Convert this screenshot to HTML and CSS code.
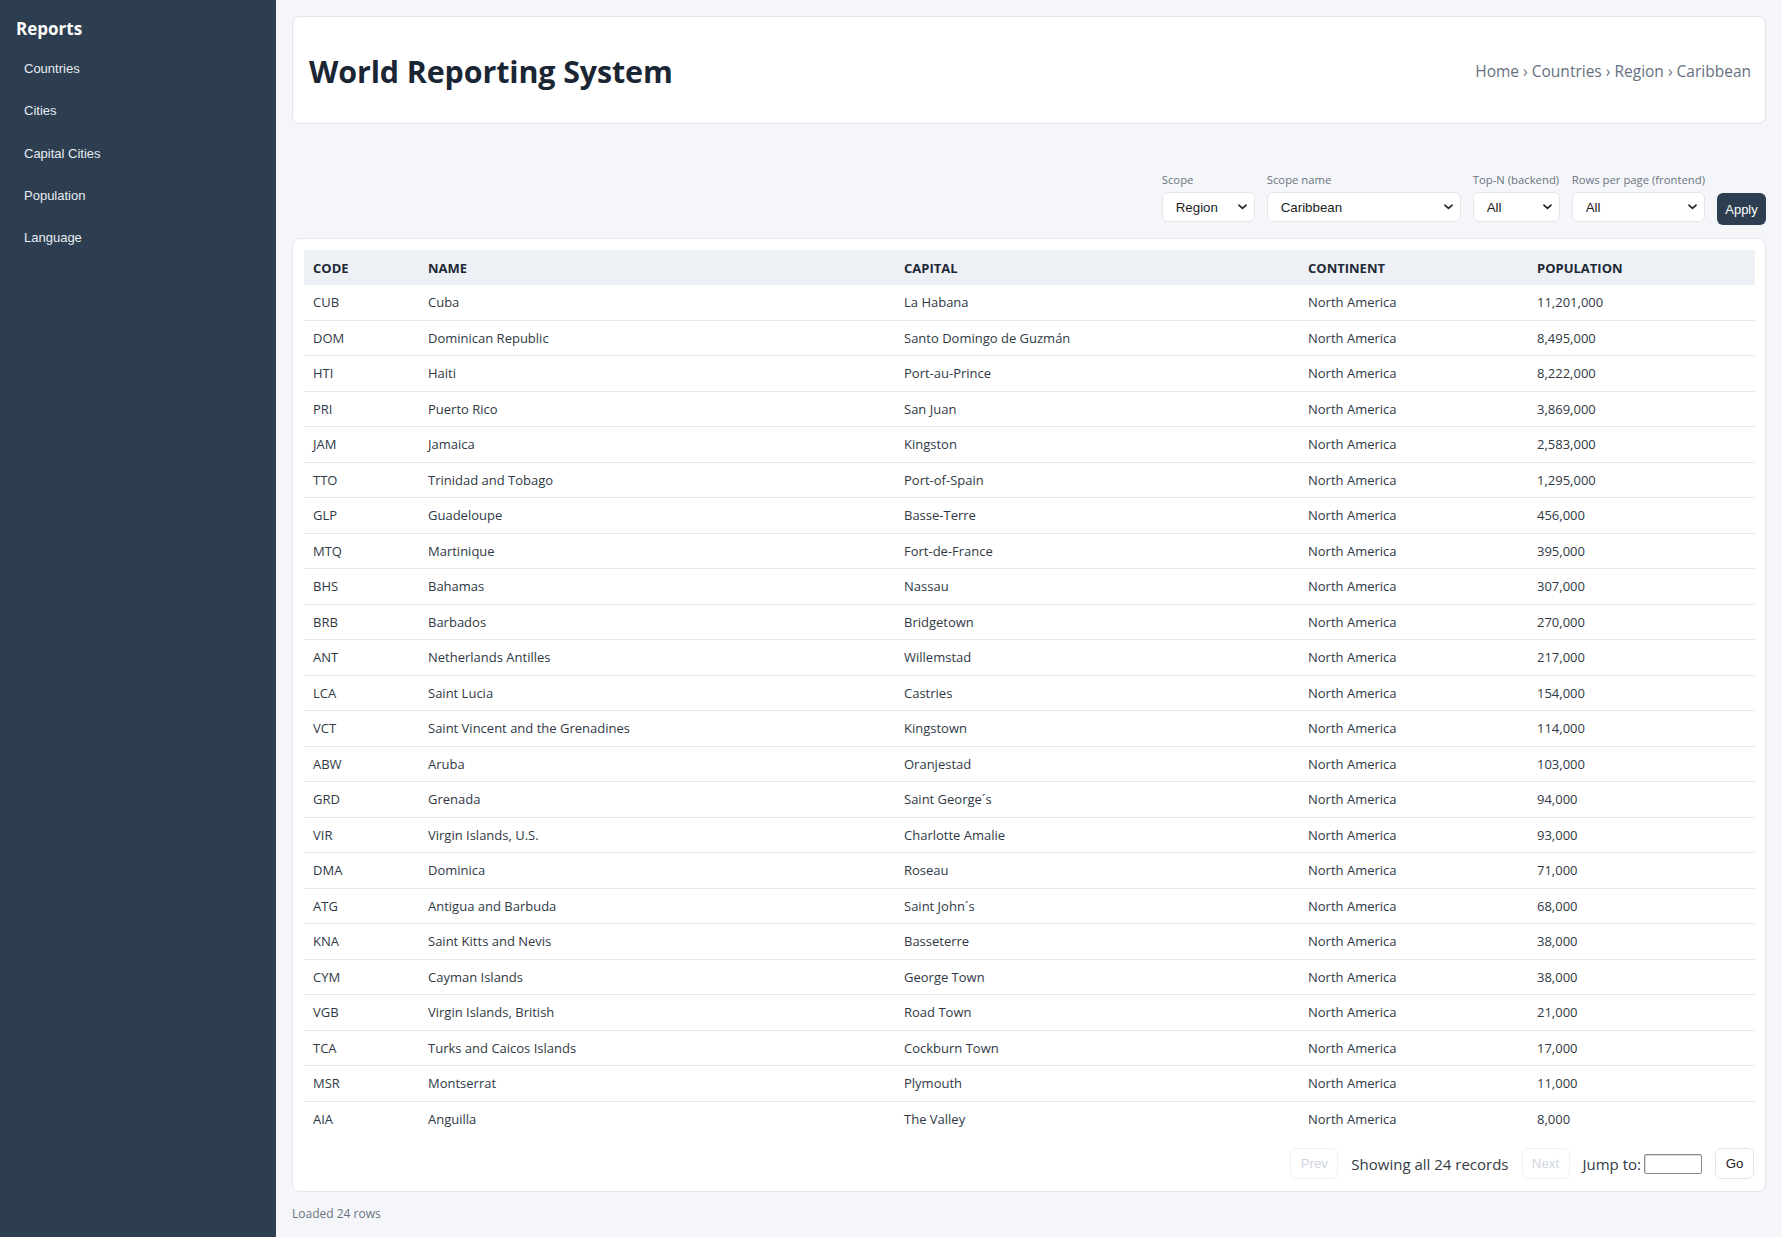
FILE: index.html
```html
<!DOCTYPE html>
<html lang="en">
<head>
<meta charset="utf-8">
<title>World Reporting System</title>
<link rel="stylesheet" href="styles.css">
</head>
<body>
<aside class="sidebar">
  <h2 class="brand">Reports</h2>
  <nav class="nav">
    <a class="nav-link" href="#">Countries</a>
    <a class="nav-link" href="#">Cities</a>
    <a class="nav-link" href="#">Capital Cities</a>
    <a class="nav-link" href="#">Population</a>
    <a class="nav-link" href="#">Language</a>
  </nav>
</aside>
<main class="main">
  <header class="header-card">
    <h1 class="title">World Reporting System</h1>
    <div class="crumbs">Home › Countries › Region › Caribbean</div>
  </header>

  <div class="filters">
    <div class="field">
      <label class="field-label">Scope</label>
      <div class="select-wrap w-scope">
        <select class="select"><option>Region</option></select>
        <svg class="chev" viewBox="0 0 10 6" width="9" height="6"><path d="M1 1l4 3.6L9 1" fill="none" stroke="#222" stroke-width="1.8" stroke-linecap="round" stroke-linejoin="round"/></svg>
      </div>
    </div>
    <div class="field">
      <label class="field-label">Scope name</label>
      <div class="select-wrap w-name">
        <select class="select"><option>Caribbean</option></select>
        <svg class="chev" viewBox="0 0 10 6" width="9" height="6"><path d="M1 1l4 3.6L9 1" fill="none" stroke="#222" stroke-width="1.8" stroke-linecap="round" stroke-linejoin="round"/></svg>
      </div>
    </div>
    <div class="field">
      <label class="field-label">Top-N (backend)</label>
      <div class="select-wrap w-top">
        <select class="select"><option>All</option></select>
        <svg class="chev" viewBox="0 0 10 6" width="9" height="6"><path d="M1 1l4 3.6L9 1" fill="none" stroke="#222" stroke-width="1.8" stroke-linecap="round" stroke-linejoin="round"/></svg>
      </div>
    </div>
    <div class="field">
      <label class="field-label">Rows per page (frontend)</label>
      <div class="select-wrap w-rows">
        <select class="select"><option>All</option></select>
        <svg class="chev" viewBox="0 0 10 6" width="9" height="6"><path d="M1 1l4 3.6L9 1" fill="none" stroke="#222" stroke-width="1.8" stroke-linecap="round" stroke-linejoin="round"/></svg>
      </div>
    </div>
    <button class="apply">Apply</button>
  </div>

  <section class="table-card">
    <table class="data">
      <colgroup>
        <col class="c-code"><col class="c-name"><col class="c-cap"><col class="c-cont"><col class="c-pop">
      </colgroup>
      <thead>
        <tr><th>CODE</th><th>NAME</th><th>CAPITAL</th><th>CONTINENT</th><th>POPULATION</th></tr>
      </thead>
      <tbody>
        <tr><td>CUB</td><td>Cuba</td><td>La Habana</td><td>North America</td><td>11,201,000</td></tr>
        <tr><td>DOM</td><td>Dominican Republic</td><td>Santo Domingo de Guzmán</td><td>North America</td><td>8,495,000</td></tr>
        <tr><td>HTI</td><td>Haiti</td><td>Port-au-Prince</td><td>North America</td><td>8,222,000</td></tr>
        <tr><td>PRI</td><td>Puerto Rico</td><td>San Juan</td><td>North America</td><td>3,869,000</td></tr>
        <tr><td>JAM</td><td>Jamaica</td><td>Kingston</td><td>North America</td><td>2,583,000</td></tr>
        <tr><td>TTO</td><td>Trinidad and Tobago</td><td>Port-of-Spain</td><td>North America</td><td>1,295,000</td></tr>
        <tr><td>GLP</td><td>Guadeloupe</td><td>Basse-Terre</td><td>North America</td><td>456,000</td></tr>
        <tr><td>MTQ</td><td>Martinique</td><td>Fort-de-France</td><td>North America</td><td>395,000</td></tr>
        <tr><td>BHS</td><td>Bahamas</td><td>Nassau</td><td>North America</td><td>307,000</td></tr>
        <tr><td>BRB</td><td>Barbados</td><td>Bridgetown</td><td>North America</td><td>270,000</td></tr>
        <tr><td>ANT</td><td>Netherlands Antilles</td><td>Willemstad</td><td>North America</td><td>217,000</td></tr>
        <tr><td>LCA</td><td>Saint Lucia</td><td>Castries</td><td>North America</td><td>154,000</td></tr>
        <tr><td>VCT</td><td>Saint Vincent and the Grenadines</td><td>Kingstown</td><td>North America</td><td>114,000</td></tr>
        <tr><td>ABW</td><td>Aruba</td><td>Oranjestad</td><td>North America</td><td>103,000</td></tr>
        <tr><td>GRD</td><td>Grenada</td><td>Saint George´s</td><td>North America</td><td>94,000</td></tr>
        <tr><td>VIR</td><td>Virgin Islands, U.S.</td><td>Charlotte Amalie</td><td>North America</td><td>93,000</td></tr>
        <tr><td>DMA</td><td>Dominica</td><td>Roseau</td><td>North America</td><td>71,000</td></tr>
        <tr><td>ATG</td><td>Antigua and Barbuda</td><td>Saint John´s</td><td>North America</td><td>68,000</td></tr>
        <tr><td>KNA</td><td>Saint Kitts and Nevis</td><td>Basseterre</td><td>North America</td><td>38,000</td></tr>
        <tr><td>CYM</td><td>Cayman Islands</td><td>George Town</td><td>North America</td><td>38,000</td></tr>
        <tr><td>VGB</td><td>Virgin Islands, British</td><td>Road Town</td><td>North America</td><td>21,000</td></tr>
        <tr><td>TCA</td><td>Turks and Caicos Islands</td><td>Cockburn Town</td><td>North America</td><td>17,000</td></tr>
        <tr><td>MSR</td><td>Montserrat</td><td>Plymouth</td><td>North America</td><td>11,000</td></tr>
        <tr><td>AIA</td><td>Anguilla</td><td>The Valley</td><td>North America</td><td>8,000</td></tr>
      </tbody>
    </table>
    <div class="pager">
      <button class="pg-btn" disabled>Prev</button>
      <span class="pg-text">Showing all 24 records</span>
      <button class="pg-btn" disabled>Next</button>
      <span class="pg-text">Jump to: <input class="jump" type="text"></span>
      <button class="pg-btn go">Go</button>
    </div>
  </section>

  <div class="status">Loaded 24 rows</div>
</main>
</body>
</html>
```

FILE: styles.css
```css
* { box-sizing: border-box; }

html, body {
  margin: 0;
  padding: 0;
}

body {
  display: flex;
  min-height: 100vh;
  background: #f4f6f9;
  font-family: "Open Sans", "Noto Sans", sans-serif;
  color: #1f2a37;
}

.sidebar {
  width: 276px;
  flex: 0 0 276px;
  background: #2d3e50;
  padding: 16px 16px;
}

.brand {
  margin: 0 0 6px 0;
  font-family: "Open Sans", sans-serif;
  font-weight: 700;
  font-size: 17px;
  line-height: 26px;
  color: #ffffff;
}

.nav {
  display: flex;
  flex-direction: column;
}

.nav-link {
  display: block;
  padding: 12px 8px;
  font-family: "Liberation Sans", Arial, sans-serif;
  font-size: 13px;
  line-height: 18.3px;
  color: #e8ecf0;
  text-decoration: none;
}

.main {
  flex: 1;
  padding: 16px 16px 16px 16px;
  display: flex;
  flex-direction: column;
}

.header-card {
  height: 108px;
  background: #ffffff;
  border: 1px solid #e1e6ec;
  border-radius: 8px;
  padding: 0 14px 0 16px;
  display: flex;
  align-items: center;
  justify-content: space-between;
}

.title {
  margin: 3px 0 0 0;
  font-size: 30.4px;
  font-weight: 700;
  line-height: 40px;
  color: #1b2634;
  letter-spacing: -0.1px;
}

.crumbs {
  font-size: 15.5px;
  font-weight: 500;
  color: #667180;
  margin-top: 2px;
}

.filters {
  margin-top: 48px;
  display: flex;
  justify-content: flex-end;
  align-items: flex-end;
  gap: 12px;
}

.field {
  display: flex;
  flex-direction: column;
  gap: 4px;
}

.field-label {
  font-size: 11.3px;
  line-height: 16px;
  color: #6b7480;
}

.select-wrap {
  position: relative;
  height: 30px;
}

.w-scope { width: 93px; }
.w-name { width: 194px; }
.w-top { width: 87px; }
.w-rows { width: 133px; }

.select {
  appearance: none;
  -webkit-appearance: none;
  width: 100%;
  height: 30px;
  margin: 0;
  padding: 0 24px 0 13px;
  background: #ffffff;
  border: 1px solid #e3e7ec;
  border-radius: 6px;
  font-family: "Liberation Sans", Arial, sans-serif;
  font-size: 13.3px;
  color: #222222;
}

.chev {
  position: absolute;
  right: 8px;
  top: 12px;
  pointer-events: none;
}

.apply {
  width: 49px;
  height: 32px;
  margin-bottom: -3px;
  padding: 0;
  background: #2c3e50;
  color: #ffffff;
  border: none;
  border-radius: 6px;
  font-family: "Liberation Sans", Arial, sans-serif;
  font-size: 13px;
}

.table-card {
  margin-top: 16px;
  background: #ffffff;
  border: 1px solid #e3e8ee;
  border-radius: 8px;
  padding: 11px 10px 12px 11px;
}

.data {
  width: 100%;
  border-collapse: separate;
  border-spacing: 0;
  table-layout: fixed;
  font-size: 13px;
}

.c-code { width: 115px; }
.c-name { width: 476px; }
.c-cap { width: 404px; }
.c-cont { width: 229px; }
.c-pop { width: auto; }

.data th {
  background: #edf1f5;
  text-align: left;
  font-weight: 700;
  color: #1e2937;
  height: 35px;
  padding: 0 9px;
}

.data td {
  height: 35.5px;
  padding: 0 9px;
  color: #2f3946;
  border-bottom: 1px solid #e6eaef;
}

.data tbody tr:last-child td {
  border-bottom: none;
}

.pager {
  margin-top: 11px;
  margin-right: 1px;
  display: flex;
  justify-content: flex-end;
  align-items: center;
  gap: 13px;
}

.pg-btn {
  height: 31px;
  width: 48px;
  padding: 0;
  background: #ffffff;
  border: 1px solid #eef0f3;
  border-radius: 6px;
  font-family: "Liberation Sans", Arial, sans-serif;
  font-size: 13.3px;
  color: #cfd5dc;
}

.pg-btn.go {
  width: 39px;
  border-color: #e3e7ec;
  color: #222222;
}

.pg-text {
  font-size: 15px;
  color: #333a44;
  display: flex;
  align-items: center;
  gap: 3px;
}

.jump {
  width: 58px;
  height: 20px;
  margin: 0;
  padding: 0 2px;
  border: 1px solid #8a8a8a;
  border-radius: 2px;
  background: #ffffff;
  box-shadow: inset 1px 1px 1px rgba(0,0,0,0.15);
}

.status {
  margin-top: 13px;
  font-size: 12px;
  color: #6b7480;
}
```
